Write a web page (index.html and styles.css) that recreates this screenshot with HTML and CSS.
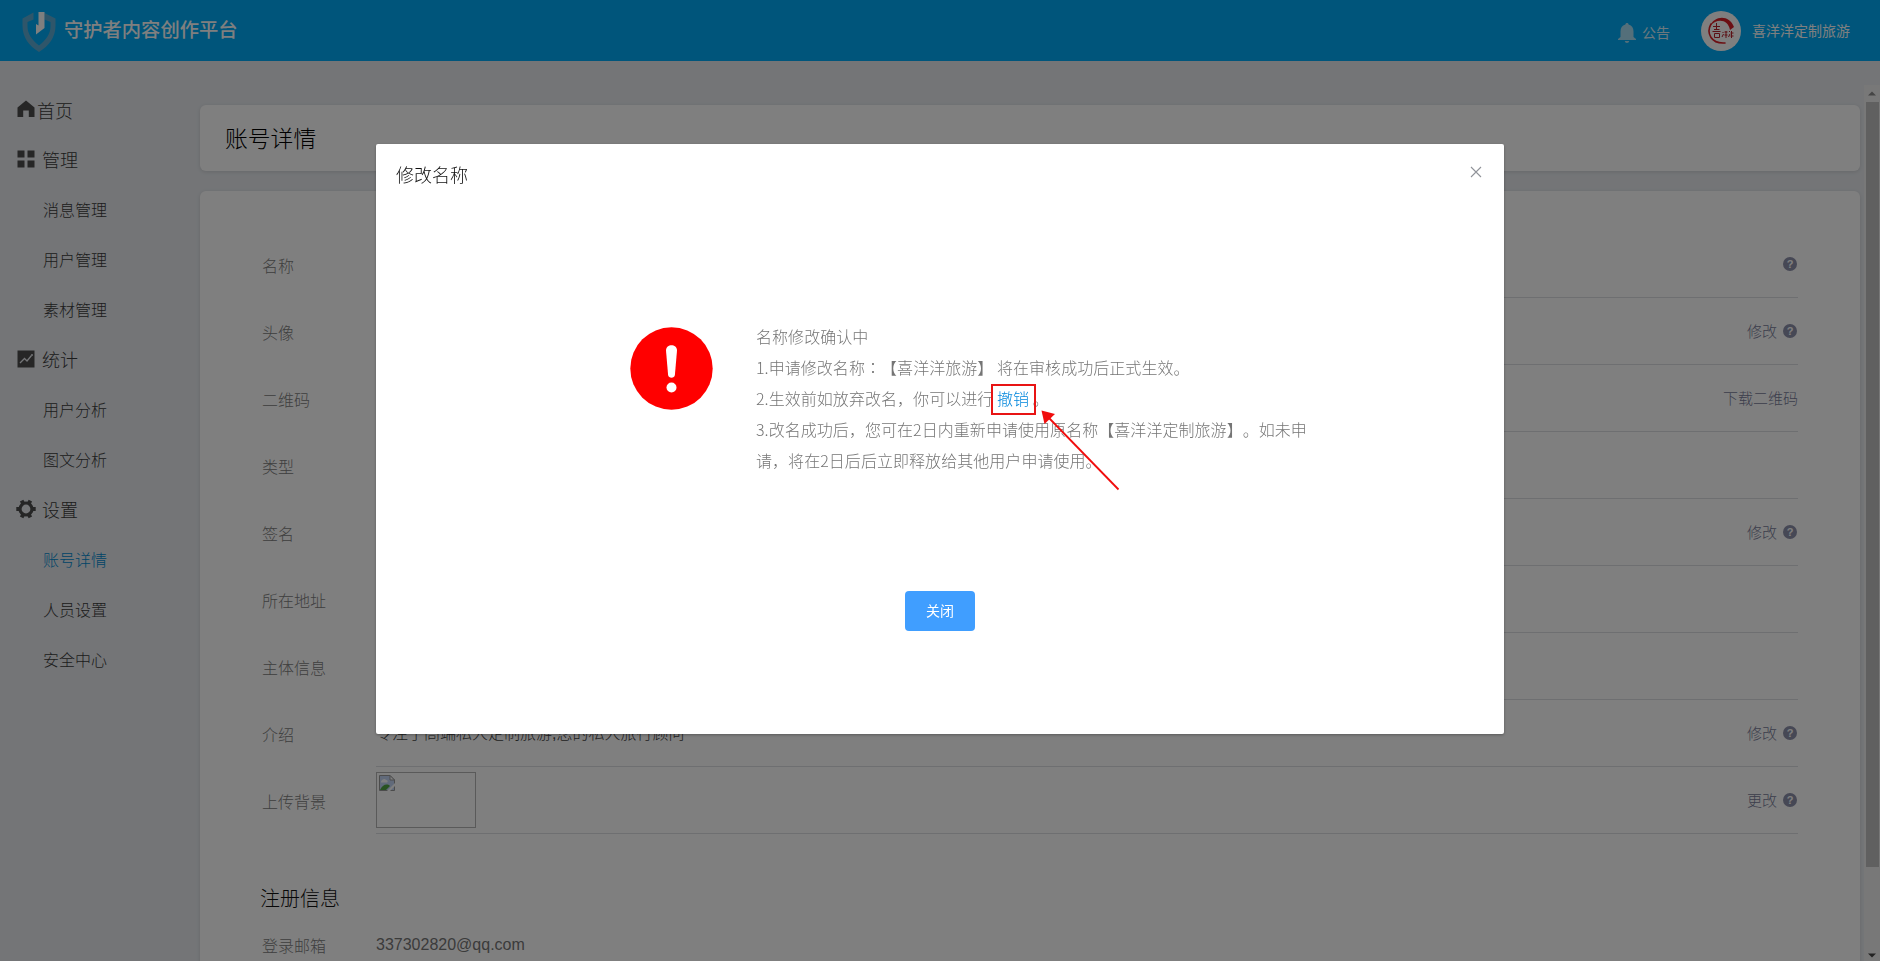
FILE: index.html
```html
<!DOCTYPE html>
<html lang="zh-CN">
<head>
<meta charset="utf-8">
<title>守护者内容创作平台</title>
<link rel="stylesheet" href="styles.css">
</head>
<body>
<div class="app">
  <header class="topbar">
    <div class="brand">
      <svg class="brand-logo" width="34" height="41" viewBox="0 0 34 41">
        <path fill="#5fadd4" d="M11.500 .500V7.500L5.500 10V14.500C5.500 22 10 28 17 33.500C24 28 28.500 22 28.500 14.500V10L22.500 7.500V1L33.500 6.500V14C33.500 25 27 34 17 40C7 34 .5 25 .5 14V6.500Z"/>
        <path fill="#fff" d="M16.500 0H22.500V16L14 22.500V12L16.500 13.500Z"/>
      </svg>
      <span class="brand-name">守护者内容创作平台</span>
    </div>
    <div class="top-right">
      <div class="notice">
        <svg width="18" height="20" viewBox="0 0 18 20"><path fill="#a9dff5" d="M9 0C10 0 10.600.7 10.600 1.600C14 2.500 15.500 5 15.500 8.500V14L18 16V17H0V16L2.500 14V8.500C2.500 5 4 2.500 7.400 1.600C7.400.7 8 0 9 0ZM6.800 18H11.200C11 19.300 10.200 20 9 20S7 19.300 6.800 18Z"/></svg>
        <span>公告</span>
      </div>
      <svg class="avatar" width="40" height="40" viewBox="0 0 40 40">
        <circle cx="20" cy="20" r="20" fill="#fff"/>
        <path d="M10 13C5 22 10 33 24 32" fill="none" stroke="#d91f26" stroke-width="1.600" stroke-linecap="round"/>
        <path d="M9 15C13 5 28 3 33 16L29 19C27 8 16 7 9 15Z" fill="#d91f26"/>
        <path d="M12 15.500h7M15.500 12v7M13 18.500h5.500M11.500 20.500h8M13.500 22.500h5v4h-5zM21.500 21l1 1M21 26l1.500-3M23.500 21h3M25 20v7M23.500 24h3M28 20l1 1M27.500 26l1.500-3M30.500 20v7M29.500 22h3M29.500 25h3" stroke="#b8202a" stroke-width="1" fill="none"/>
      </svg>
      <span class="user">喜洋洋定制旅游</span>
    </div>
  </header>
  <div class="body">
    <nav class="side">
      <a class="group home"><svg width="18" height="18" viewBox="0 0 18 18"><path d="M9 .5L17.500 7.500V17H11.800V10.500H6.200V17H.5V7.500Z"/></svg>首页</a>
      <a class="group"><svg width="18" height="18" viewBox="0 0 18 18"><path d="M.5.500h7v7h-7zM10.500.500h7v7h-7zM.5 10.500h7v7h-7zM10.500 10.500h7v7h-7z"/></svg>管理</a>
      <a class="item">消息管理</a>
      <a class="item">用户管理</a>
      <a class="item">素材管理</a>
      <a class="group"><svg width="18" height="18" viewBox="0 0 18 18"><path d="M.5.500h17v17H.5z"/><path d="M3 13L7.500 8.500L10 11L14.500 5.500" fill="none" stroke="#e8ebef" stroke-width="1.300"/><circle cx="15" cy="5" r="1" fill="#e8ebef"/></svg>统计</a>
      <a class="item">用户分析</a>
      <a class="item">图文分析</a>
      <a class="group gear"><svg width="20" height="20" viewBox="0 0 20 20"><circle cx="10" cy="10" r="6" fill="none" stroke="#4c4c4c" stroke-width="3.200"/><path d="M.3 8h3v4h-3zM16.700 8h3v4h-3zM3.900 2.600l3.400-1.900 1.500 2.600-3.400 2zM12.700.7l3.400 1.900-1.500 2.600-3.400-2zM3.900 17.400l3.400 1.900 1.500-2.600-3.400-2zM12.700 19.300l3.400-1.900-1.500-2.600-3.400 2z"/></svg>设置</a>
      <a class="item active">账号详情</a>
      <a class="item">人员设置</a>
      <a class="item">安全中心</a>
    </nav>
    <main class="content">
      <section class="card title-card">账号详情</section>
      <section class="card detail">
        <div class="row"><label>名称</label><div class="value"><i class="help">?</i></div></div>
        <div class="row"><label>头像</label><div class="value"><span class="act">修改</span><i class="help">?</i></div></div>
        <div class="row"><label>二维码</label><div class="value"><span class="act">下载二维码</span></div></div>
        <div class="row"><label>类型</label><div class="value"></div></div>
        <div class="row"><label>签名</label><div class="value"><span class="act">修改</span><i class="help">?</i></div></div>
        <div class="row"><label>所在地址</label><div class="value"></div></div>
        <div class="row"><label>主体信息</label><div class="value"></div></div>
        <div class="row"><label>介绍</label><div class="value"><span class="text">专注于高端私人定制旅游,您的私人旅行顾问</span><span class="act">修改</span><i class="help">?</i></div></div>
        <div class="row"><label>上传背景</label><div class="value">
          <div class="thumb"><svg width="16" height="16" viewBox="0 0 16 16"><path d="M.5.500H11L15.500 5V15.500H.5Z" fill="#c3d5f5" stroke="#999"/><path d="M2 6.500C3 4 6 3 7 5C9 5 9 7 8 7.500H2Z" fill="#fff"/><path d="M1 15C3 10 8 8 11 11L7 15Z" fill="#52a744"/><path d="M8 16L16 8V11L11 16Z" fill="#fff"/><path d="M11 .5V5H15.500Z" fill="#fff" stroke="#999"/></svg></div>
          <span class="act">更改</span><i class="help">?</i></div></div>
        <h2 class="sub">注册信息</h2>
        <div class="row plain"><label>登录邮箱</label><div class="value"><span class="text mail">337302820@qq.com</span></div></div>
      </section>
    </main>
    <div class="scroll">
      <svg class="arrow" width="8" height="5" viewBox="0 0 8 5"><path d="M0 4.500L4 .5L8 4.500Z" fill="#8a8a8a"/></svg>
      <div class="thumb-bar"></div>
      <svg class="arrow down" width="8" height="5" viewBox="0 0 8 5"><path d="M0 .5H8L4 4.500Z" fill="#444"/></svg>
    </div>
  </div>
</div>
<div class="mask">
  <div class="dialog">
    <div class="dialog-head"><span>修改名称</span>
      <svg width="12" height="12" viewBox="0 0 12 12"><path d="M1 1L11 11M11 1L1 11" stroke="#909399" stroke-width="1.100"/></svg>
    </div>
    <div class="dialog-body">
      <svg class="warn" width="83" height="83" viewBox="0 0 83 83"><circle cx="41.500" cy="41.500" r="41.200" fill="#f00"/><path d="M36 23.500C36 16.500 47 16.500 47 23.500L44.900 48C44.500 51.500 38.500 51.500 38.100 48Z" fill="#fff"/><circle cx="41.500" cy="60.500" r="5" fill="#fff"/></svg>
      <div class="msg">
        <p>名称修改确认中</p>
        <p>1.申请修改名称<span class="colon" lang="zh-TW">：</span>【喜洋洋旅游】 将在审核成功后正式生效。</p>
        <p>2.生效前如放弃改名，你可以进行 <span class="undo">撤销<svg class="pointer" width="80" height="82" viewBox="0 0 80 82"><path d="M8 8L77.500 79.500" stroke="#f00d0d" stroke-width="1.800"/><path d="M.5.500L14 4L3.500 14Z" fill="#f00d0d"/></svg></span> 。</p>
        <p>3.改名成功后，您可在2日内重新申请使用原名称【喜洋洋定制旅游】。如未申<br>请，将在2日后后立即释放给其他用户申请使用。</p>
      </div>
    </div>
    <div class="dialog-foot"><button class="btn">关闭</button></div>
  </div>
</div>
</body>
</html>
```
FILE: styles.css
```css
*, *::before { box-sizing: border-box; }
body {
  margin: 0;
  height: 961px;
  overflow: hidden;
  font-family: "Liberation Sans", "Noto Sans CJK SC", sans-serif;
  font-weight: 300;
  text-spacing-trim: space-all;
}
.app { height: 961px; background: #e8ebef; display: flex; flex-direction: column; }
.topbar {
  height: 61px; flex: none; background: #00abf6;
  display: flex; justify-content: space-between; padding: 0 30px 0 22px; color: #fff;
}
.brand { display: flex; align-items: flex-start; padding-top: 12px; gap: 8px; }
.brand-name { font-size: 19.300px; font-weight: 500; line-height: 38px; color: #fff; }
.top-right { display: flex; align-items: center; font-size: 14px; }
.notice { display: flex; align-items: center; gap: 6px; margin: 5px 31px 0 0; color: #d8f1fc; font-weight: 400; }
.notice span, .user { padding-bottom: 2px; }
.avatar { margin-right: 11px; }
.user { font-weight: 400; }
.body { flex: 1; min-height: 0; display: flex; overflow: hidden; }
.side { width: 200px; flex: none; padding-top: 23px; color: #3a3a3a; fill: #4c4c4c; }
.side a { display: flex; align-items: center; height: 50px; }
.group { font-size: 18px; padding-left: 17px; gap: 7px; }
.group.home { gap: 2px; padding-top: 1px; }
.group.home svg { margin-top: -2px; }
.group.gear { padding-left: 16px; gap: 6px; }
.item { font-size: 16px; padding-left: 43px; }
.item.active { color: #008ad0; }
.content { width: 1660px; padding-top: 44px; display: flex; flex-direction: column; gap: 20px; }
.card { background: #fff; border-radius: 6px; box-shadow: 0 1px 4px rgba(0, 0, 0, .12); }
.title-card { height: 66px; line-height: 66px; padding: 1px 25px 0; font-size: 22.800px; color: #000; flex: none; }
.detail { height: 900px; flex: none; padding: 40px 62px; }
.row { display: flex; height: 67px; }
.row label { width: 114px; flex: none; font-size: 16px; line-height: 71px; color: #808080; }
.value { flex: 1; border-bottom: 1px solid #dcdee2; display: flex; align-items: center; justify-content: flex-end; font-size: 16px; color: #444; }
.value .text, .value .thumb { margin-right: auto; }
.text { padding-bottom: 2px; }
.mail { color: #777; padding-bottom: 0; }
.act { font-size: 15px; color: #777b98; padding-bottom: 2px; }
.help { width: 14px; height: 14px; border-radius: 50%; background: #8d90aa; color: #fff; font: bold 11px/14px "Liberation Sans", sans-serif; text-align: center; margin: 0 1px 0 6px; }
.thumb { width: 100px; height: 56px; border: 1px solid #b4b4b4; padding: 2px; }
.thumb svg { display: block; }
.sub { margin: 50px 0 0 -2px; font-size: 20px; font-weight: 300; line-height: 30px; color: #111; }
.plain { margin-top: -3px; }
.plain .value { border: 0; }
.scroll { width: 16px; margin: 24px 0 0 4px; background: #f1f1f1; display: flex; flex-direction: column; align-items: center; }
.arrow { margin: 6px 0; flex: none; }
.thumb-bar { width: 13px; height: 765px; background: #c1c1c1; flex: none; }
.arrow.down { margin: auto 0 3px; }
.mask { position: fixed; inset: 0; background: rgba(0, 0, 0, .5); display: flex; justify-content: center; align-items: flex-start; padding-top: 144px; }
.dialog { width: 1128px; height: 590px; background: #fff; border-radius: 2px; box-shadow: 0 1px 3px rgba(0, 0, 0, .3); display: flex; flex-direction: column; }
.dialog-head { display: flex; justify-content: space-between; align-items: flex-start; padding: 16px 22px 0 20px; font-size: 18px; line-height: 32px; color: #111; }
.dialog-head svg { margin-top: 6px; }
.dialog-body { display: flex; padding: 129px 0 0 254px; gap: 43px; height: 399px; }
.warn { margin-top: 6px; flex: none; }
.msg { font-family: "Noto Sans CJK SC", sans-serif; font-size: 16px; line-height: 31px; letter-spacing: .05px; color: #757575; white-space: nowrap; }
.msg p { margin: 0; height: 31px; }
.colon { font-family: "Noto Sans CJK TC", sans-serif; }
.undo { position: relative; color: #0086dc; }
.undo::before { content: ""; position: absolute; left: -6px; top: -2px; width: 45px; height: 31px; border: 2px solid #e81414; }
.pointer { position: absolute; left: 44px; top: 24px; }
.dialog-foot { display: flex; justify-content: center; }
.btn { width: 70px; height: 40px; border: 0; border-radius: 4px; background: #409eff; color: #fff; font-family: inherit; font-size: 14px; padding-bottom: 3px; }
```
